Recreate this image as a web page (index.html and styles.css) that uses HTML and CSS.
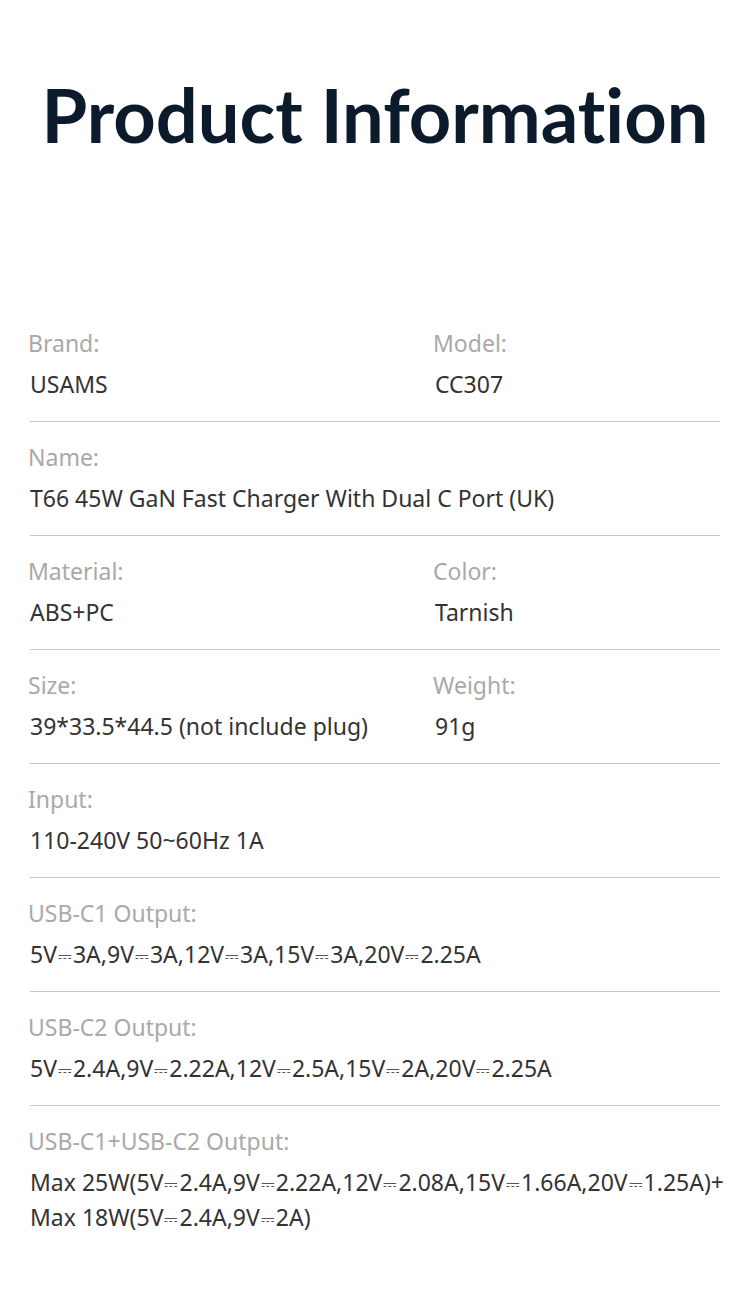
FILE: index.html
```html
<!DOCTYPE html>
<html lang="en">
<head>
<meta charset="utf-8">
<title>Product Information</title>
<link rel="stylesheet" href="styles.css">
</head>
<body>
<main class="page">
  <h1 class="title">Product Information</h1>
  <section class="specs">
    <div class="row">
      <div class="cell"><div class="label">Brand:</div><div class="value">USAMS</div></div>
      <div class="cell"><div class="label">Model:</div><div class="value">CC307</div></div>
    </div>
    <div class="row">
      <div class="cell wide"><div class="label">Name:</div><div class="value">T66 45W GaN Fast Charger With Dual C Port (UK)</div></div>
    </div>
    <div class="row">
      <div class="cell"><div class="label">Material:</div><div class="value">ABS+PC</div></div>
      <div class="cell"><div class="label">Color:</div><div class="value">Tarnish</div></div>
    </div>
    <div class="row">
      <div class="cell"><div class="label">Size:</div><div class="value">39*33.5*44.5 (not include plug)</div></div>
      <div class="cell"><div class="label">Weight:</div><div class="value">91g</div></div>
    </div>
    <div class="row">
      <div class="cell wide"><div class="label">Input:</div><div class="value">110-240V 50~60Hz 1A</div></div>
    </div>
    <div class="row">
      <div class="cell wide"><div class="label">USB-C1 Output:</div><div class="value">5V<span class="dc">⎓</span>3A,9V<span class="dc">⎓</span>3A,12V<span class="dc">⎓</span>3A,15V<span class="dc">⎓</span>3A,20V<span class="dc">⎓</span>2.25A</div></div>
    </div>
    <div class="row">
      <div class="cell wide"><div class="label">USB-C2 Output:</div><div class="value">5V<span class="dc">⎓</span>2.4A,9V<span class="dc">⎓</span>2.22A,12V<span class="dc">⎓</span>2.5A,15V<span class="dc">⎓</span>2A,20V<span class="dc">⎓</span>2.25A</div></div>
    </div>
    <div class="row last">
      <div class="cell wide"><div class="label">USB-C1+USB-C2 Output:</div><div class="value">Max 25W(5V<span class="dc">⎓</span>2.4A,9V<span class="dc">⎓</span>2.22A,12V<span class="dc">⎓</span>2.08A,15V<span class="dc">⎓</span>1.66A,20V<span class="dc">⎓</span>1.25A)+<br>Max 18W(5V<span class="dc">⎓</span>2.4A,9V<span class="dc">⎓</span>2A)</div></div>
    </div>
  </section>
</main>
</body>
</html>
```

FILE: styles.css
```css
html, body {
  margin: 0;
  padding: 0;
  background: #ffffff;
}
.page {
  width: 750px;
  font-family: "Noto Sans", "Open Sans", sans-serif;
}
.title {
  margin: 0;
  padding-top: 72px;
  height: 308px;
  box-sizing: border-box;
  text-align: center;
  font-family: "Lato", "Noto Sans", sans-serif;
  font-weight: 700;
  font-size: 74px;
  line-height: 86px;
  color: #0c1b2b;
  font-variant-ligatures: none;
}
.specs {
  padding: 0 30px;
}
.row {
  display: grid;
  grid-template-columns: 405px 1fr;
  padding: 20px 0 19px;
  border-bottom: 1px solid #c9c9c9;
}
.row.last {
  border-bottom: none;
}
.cell.wide {
  grid-column: 1 / -1;
}
.label {
  font-size: 23px;
  line-height: 30px;
  color: #a9a9a9;
  margin-left: -2px;
}
.value {
  margin-top: 9px;
  font-size: 23px;
  line-height: 35px;
  color: #333333;
  white-space: nowrap;
}
.dc {
  display: inline-block;
  font-family: "DejaVu Sans", sans-serif;
  font-size: 17px;
  line-height: 1;
  margin: 0 1px;
  color: #555;
  vertical-align: 1px;
}
```
